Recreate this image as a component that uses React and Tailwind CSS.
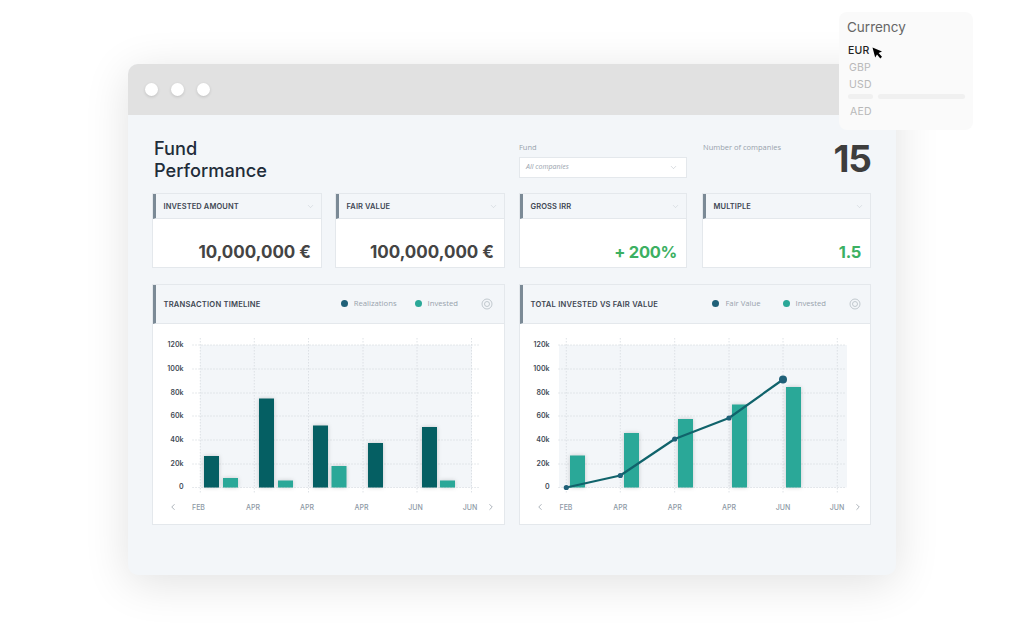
import React from 'react'
import { ChevronDown, ChevronLeft, ChevronRight } from 'lucide-react'

const HEAD = "font-['Inter',sans-serif]"
const BODY = "font-['Open_Sans',sans-serif]"

const yTicks = [
  ['120k', 345],
  ['100k', 369],
  ['80k', 393],
  ['60k', 416],
  ['40k', 440],
  ['20k', 464],
  ['0', 487.5],
]

const timelineBars = [
  { x: 204, top: 456, w: 15, c: '#055f63' },
  { x: 223, top: 478, w: 15, c: '#2aa898' },
  { x: 259, top: 398.5, w: 15, c: '#055f63' },
  { x: 278, top: 480.5, w: 15, c: '#2aa898' },
  { x: 313, top: 425.5, w: 15, c: '#055f63' },
  { x: 331.5, top: 466, w: 15, c: '#2aa898' },
  { x: 368, top: 443, w: 15, c: '#055f63' },
  { x: 422, top: 427, w: 15, c: '#055f63' },
  { x: 440, top: 480.5, w: 15, c: '#2aa898' },
]

const valueBars = [
  { x: 570, top: 455.5, w: 15, c: '#2aa898' },
  { x: 624, top: 433, w: 15, c: '#2aa898' },
  { x: 678, top: 419, w: 15, c: '#2aa898' },
  { x: 732, top: 404.5, w: 15, c: '#2aa898' },
  { x: 786, top: 387, w: 15, c: '#2aa898' },
]

const linePoints = [
  [566.3, 487.5],
  [620.3, 475.5],
  [674.7, 439],
  [729, 418],
  [783, 379.5],
]

function Chart({ viewBox, plotX, plotW, gridX, labelX, labelAxisX, bars, line }) {
  const months = ['FEB', 'APR', 'APR', 'APR', 'JUN', 'JUN']
  return (
    <svg viewBox={viewBox} className="block w-full h-full">
      <rect x={plotX} y="345" width={plotW} height="142.5" fill="#f3f6f9" />
      {yTicks.map(([label, y]) => (
        <g key={label}>
          <line x1={gridX[0] - 8} x2={gridX[5] + 8} y1={y} y2={y} stroke="#d5dbe0" strokeWidth="0.8" strokeDasharray="1.5 1.5" />
          <text x={labelAxisX} y={y + 1.5} textAnchor="end" fontSize="7" fontWeight="600" fill="#3f4a55" fontFamily="Inter, sans-serif">{label}</text>
        </g>
      ))}
      {gridX.map((x, i) => (
        <line key={i} x1={x} x2={x} y1="338" y2="493" stroke="#d5dbe0" strokeWidth="0.8" strokeDasharray="1.5 1.5" />
      ))}
      <g className="drop-shadow-[0_0_2px_rgba(0,0,0,0.18)]">
        {bars.map((b, i) => (
          <rect key={i} x={b.x} y={b.top} width={b.w} height={487.5 - b.top} fill={b.c} />
        ))}
      </g>
      {months.map((m, i) => (
        <text key={i} x={labelX[i]} y="509.5" textAnchor="middle" fontSize="7" fontWeight="500" fill="#8d99a5" fontFamily="Inter, sans-serif">{m}</text>
      ))}
      {line && (
        <g>
          <polyline points={line.map(p => p.join(',')).join(' ')} fill="none" stroke="#10636b" strokeWidth="2.2" strokeLinejoin="round" />
          {line.map(([x, y], i) => (
            <circle key={i} cx={x} cy={y} r={i === line.length - 1 ? 4 : 2.6} fill="#1f6078" />
          ))}
        </g>
      )}
    </svg>
  )
}

function StatCard({ title, value, green, className }) {
  return (
    <div className={`h-[75px] flex flex-col bg-white border border-[#e4e8ec] ${className}`}>
      <div className="h-[25px] shrink-0 flex items-center justify-between bg-[#f3f6f9] border-l-[3px] border-l-[#7b8a96] border-b border-b-[#e4e8ec] pl-[7.5px] pr-[6px]">
        <span className={`${HEAD} pt-[1px] text-[7.5px] font-semibold uppercase text-[#3e4753] tracking-[0.1px]`}>{title}</span>
        <ChevronDown size={9} strokeWidth={1} className="text-[#b4bcc4]" />
      </div>
      <div className={`flex-1 flex items-center justify-end pt-[19px] ${green ? 'pr-[9px]' : 'pr-[10px]'}`}>
        <span className={`${HEAD} font-bold leading-none ${green ? 'text-[16.5px] tracking-[-0.3px] text-[#3cb062]' : 'text-[17px] text-[#444444]'}`}>{value}</span>
      </div>
    </div>
  )
}

function Legend({ color, label, className }) {
  return (
    <div className={`flex items-center gap-[6px] ${className}`}>
      <span className={`w-[7px] h-[7px] rounded-full ${color}`} />
      <span className={`${BODY} text-[7.7px] text-[#98a2ac]`}>{label}</span>
    </div>
  )
}

function ChartPanel({ title, legend, className, children, headerRight }) {
  return (
    <div className={`relative h-[241px] flex flex-col bg-white border border-[#e4e8ec] ${className}`}>
      <div className={`h-[39px] shrink-0 flex items-center bg-[#f3f6f9] border-l-[3px] border-l-[#7b8a96] border-b border-b-[#e4e8ec] pl-[7.5px] ${headerRight}`}>
        <span className={`${HEAD} pt-[1px] text-[7.6px] font-semibold uppercase text-[#3e4753] tracking-[0.2px]`}>{title}</span>
        <div className="ml-auto flex items-center">
          {legend}
          <svg viewBox="0 0 12 12" className="ml-[23px] w-[12px] h-[12px]" fill="none" stroke="#b4bcc3" strokeWidth="0.8">
            <circle cx="6" cy="6" r="5" />
            <circle cx="6" cy="6" r="2.5" />
          </svg>
        </div>
      </div>
      <div className="flex-1 min-h-0">{children}</div>
      <ChevronLeft size={10} strokeWidth={1.5} className="absolute top-[217px] left-[15px] text-[#7b8792]" />
      <ChevronRight size={10} strokeWidth={1.5} className="absolute top-[217px] left-[333px] text-[#7b8792]" />
    </div>
  )
}

function CurrencyPopup() {
  return (
    <div className="absolute left-[839px] top-[12px] w-[134px] h-[118px] rounded-[8px] bg-[#fafafa] pl-[8px] pt-[7px]">
      <div className={`${HEAD} text-[13.5px] leading-[17px] text-[#666666]`}>Currency</div>
      <div className={`${HEAD} text-[10.5px] tracking-[0.2px] leading-[12px] mt-[9px] ml-[1px] font-medium text-[#222222]`}>EUR</div>
      <div className={`${HEAD} text-[10.5px] tracking-[0.2px] leading-[12px] mt-[5px] ml-[2px] text-[#b8b8b8]`}>GBP</div>
      <div className={`${HEAD} text-[10.5px] tracking-[0.2px] leading-[12px] mt-[5px] ml-[2px] text-[#b8b8b8]`}>USD</div>
      <div className="flex gap-[5px] mt-[3px] ml-[1px]">
        <div className="w-[25px] h-[5px] rounded-full bg-[#f0f0f0]" />
        <div className="w-[87px] h-[5px] rounded-full bg-[#f0f0f0]" />
      </div>
      <div className={`${HEAD} text-[10.5px] tracking-[0.2px] leading-[12px] mt-[7px] ml-[3px] text-[#b8b8b8]`}>AED</div>
      <svg viewBox="0 0 11 12" className="absolute left-[33px] top-[35px] w-[11px] h-[12px]">
        <path d="M0.5 0.5 L10 4.5 L6.6 6 L10 9.8 L8.3 11.5 L5 7.6 L3.2 10.6 Z" fill="#000000" />
      </svg>
    </div>
  )
}

export default function App() {
  return (
    <div className="relative w-[1024px] h-[640px] overflow-hidden bg-white pt-[64px] pl-[128px]">
      <div className="w-[768px] h-[511px] rounded-[10px] overflow-hidden bg-[#f3f6f9] shadow-[0_8px_45px_rgba(0,0,0,0.12)]">
        <div className="h-[51px] flex items-center gap-[13px] pl-[17px] bg-[#e1e1e1]">
          <span className="w-[13px] h-[13px] rounded-full bg-white shadow-[0_1px_3px_rgba(0,0,0,0.15)]" />
          <span className="w-[13px] h-[13px] rounded-full bg-white shadow-[0_1px_3px_rgba(0,0,0,0.15)]" />
          <span className="w-[13px] h-[13px] rounded-full bg-white shadow-[0_1px_3px_rgba(0,0,0,0.15)]" />
        </div>

        <div className="pl-[24px] pr-[25px]">
          <div className="h-[78px] flex">
            <h1 className={`${HEAD} w-[367px] pl-[2px] pt-[22px] text-[18.2px] leading-[22px] font-medium text-[#1f2d3a]`}>
              Fund
              <br />
              Performance
            </h1>
            <div className="w-[168px] pt-[27px]">
              <div className={`${BODY} text-[7.5px] leading-[10px] text-[#98a2ac]`}>Fund</div>
              <div className="mt-[5px] h-[21px] flex items-center justify-between bg-white border border-[#e4e8ec] pl-[6px] pr-[8px]">
                <span className={`${BODY} text-[7px] italic text-[#98a2ac]`}>All companies</span>
                <ChevronDown size={9} strokeWidth={1} className="text-[#98a2ac]" />
              </div>
            </div>
            <div className={`${BODY} ml-[16px] pt-[27px] text-[7.5px] leading-[10px] text-[#98a2ac]`}>Number of companies</div>
            <div className={`${HEAD} ml-auto pt-[22px] text-[37px] leading-[44px] font-bold tracking-[-1px] text-[#3d3d3d]`}>15</div>
          </div>

          <div className="flex">
            <StatCard className="w-[170px]" title="Invested amount" value="10,000,000 €" />
            <StatCard className="w-[170px] ml-[13px]" title="Fair value" value="100,000,000 €" />
            <StatCard className="w-[168px] ml-[14px]" title="Gross IRR" value="+ 200%" green />
            <StatCard className="w-[169px] ml-[15px]" title="Multiple" value="1.5" green />
          </div>

          <div className="flex mt-[16px]">
            <ChartPanel
              className="w-[353px]"
              title="Transaction timeline"
              headerRight="pr-[11px]"
              legend={
                <>
                  <Legend color="bg-[#1f6078]" label="Realizations" />
                  <Legend color="bg-[#2aa898]" label="Invested" className="ml-[18px]" />
                </>
              }
            >
              <Chart
                viewBox="153 324 351 200"
                plotX={200}
                plotW={272}
                gridX={[200.3, 254.3, 308.5, 363, 417, 471.5]}
                labelX={[198.5, 253, 307, 361.5, 415.5, 470]}
                labelAxisX={183.5}
                bars={timelineBars}
              />
            </ChartPanel>
            <ChartPanel
              className="w-[352px] ml-[14px]"
              title="Total invested vs fair value"
              headerRight="pr-[9px]"
              legend={
                <>
                  <Legend color="bg-[#1f6078]" label="Fair Value" />
                  <Legend color="bg-[#2aa898]" label="Invested" className="ml-[22px]" />
                </>
              }
            >
              <Chart
                viewBox="520 324 350 200"
                plotX={559}
                plotW={288}
                gridX={[566.3, 620.3, 674.7, 729, 783, 837.3]}
                labelX={[566, 620.3, 674.7, 729, 783, 837]}
                labelAxisX={549.5}
                bars={valueBars}
                line={linePoints}
              />
            </ChartPanel>
          </div>
        </div>
      </div>

      <CurrencyPopup />
    </div>
  )
}
